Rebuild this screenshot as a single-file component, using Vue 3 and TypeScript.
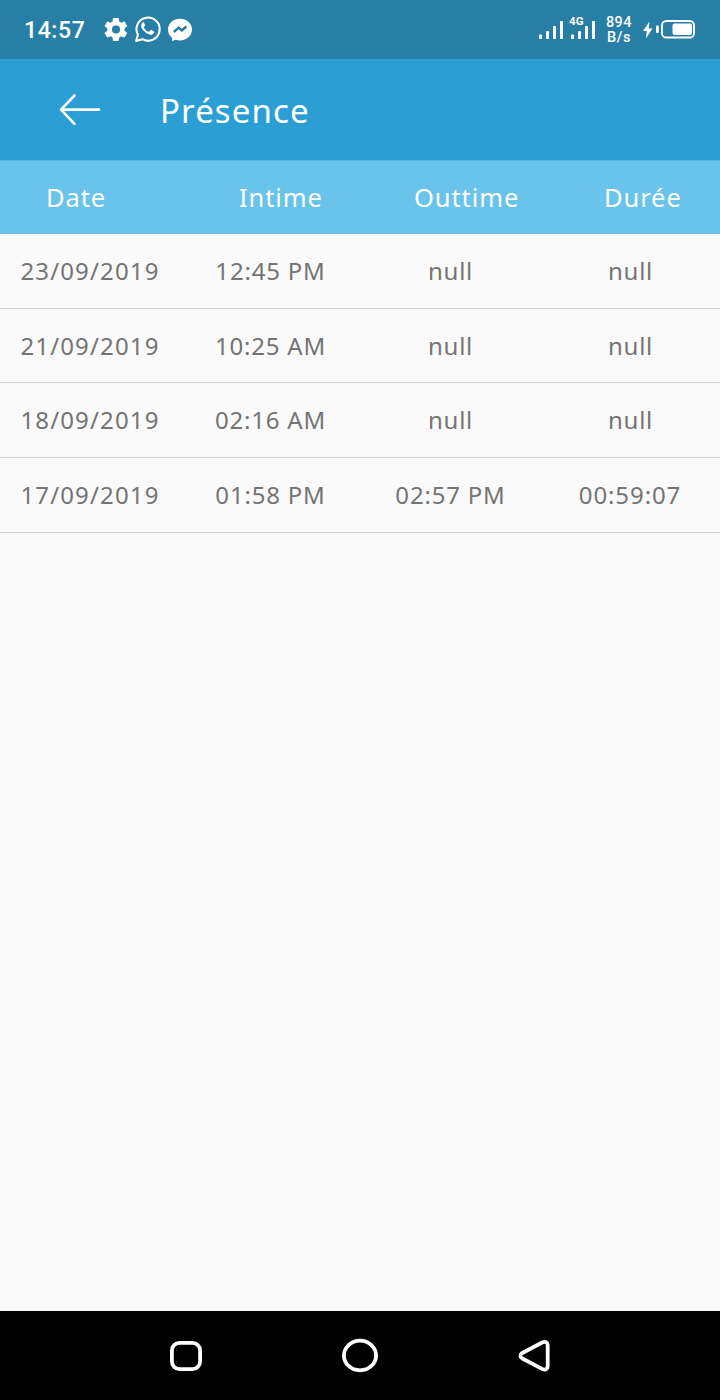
<script setup lang="ts">
interface Entry {
  date: string
  intime: string
  outtime: string | null
  duration: string | null
}

const entries: Entry[] = [
  { date: '23/09/2019', intime: '12:45 PM', outtime: null, duration: null },
  { date: '21/09/2019', intime: '10:25 AM', outtime: null, duration: null },
  { date: '18/09/2019', intime: '02:16 AM', outtime: null, duration: null },
  { date: '17/09/2019', intime: '01:58 PM', outtime: '02:57 PM', duration: '00:59:07' },
]
</script>

<template>
  <div class="screen">
    <div class="status">
      <span class="clock">14:57</span>
      <svg class="apps" width="90" height="30" viewBox="104 15 90 30">
        <g transform="translate(102.2 15.7) scale(1.15)">
          <path fill="#fff" d="M19.4 13c0-.3.1-.6.1-1s0-.7-.1-1l2.1-1.6c.2-.2.2-.4.1-.6l-2-3.5c-.1-.2-.4-.3-.6-.2l-2.5 1c-.5-.4-1.1-.7-1.7-1l-.4-2.6c0-.3-.2-.5-.5-.5h-4c-.2 0-.4.2-.5.5L9 5.1c-.6.2-1.1.6-1.7 1l-2.5-1c-.2-.1-.5 0-.6.2l-2 3.5c-.1.2-.1.5.1.6L4.5 11c0 .3-.1.7-.1 1s0 .7.1 1l-2.2 1.6c-.2.2-.2.4-.1.6l2 3.5c.1.2.4.3.6.2l2.5-1c.5.4 1.1.7 1.7 1l.4 2.6c0 .3.2.5.5.5h4c.2 0 .5-.2.5-.5l.4-2.6c.6-.2 1.2-.6 1.7-1l2.5 1c.2.1.5 0 .6-.2l2-3.5c.1-.2.1-.5-.1-.6zM12 15.5a3.5 3.5 0 1 1 0-7 3.500 3.500 0 0 1 0 7z" />
        </g>
        <path d="M136.200 41l1.700-6.300a11.600 11.600 0 1 1 4.400 4.500z" fill="none" stroke="#fff" stroke-width="2.100" stroke-linejoin="round" />
        <path fill="#fff" d="M144 22.700c-.5-.6-1.100-.5-1.600 0-3.300 3.200.8 7.900 3.300 9.800 2.800 2.200 6.200 3.500 8.300.5.500-1 .3-1.400-.4-1.800l-2.200-1.100c-.5-.2-.8-.1-1.100.3l-1 1.200c-.3.300-.6.300-1 .1-2-.9-3.300-2.100-4.400-4-.2-.4-.1-.6.2-.9l.9-1.200c.2-.4.1-.6 0-.9z" />
        <path fill="#fff" d="M180 18.700c-6.800 0-12 4.700-12 10.800 0 3.400 1.500 6.300 4 8.200v3.300l3.700-1.300c1.300.5 2.800.7 4.300.7 6.700 0 12-4.800 12-10.900s-5.300-10.800-12-10.800z" />
        <path fill="none" stroke="#287fa6" stroke-width="2.400" stroke-linejoin="round" d="M173.800 32l4.900-4.400 3.100 2.900 4.600-4" />
      </svg>
      <div class="spacer"></div>
      <svg class="signal" width="58" height="28" viewBox="538 14 58 28">
        <g fill="#fff">
          <rect x="539" y="34.500" width="3" height="4.500" rx=".7" />
          <rect x="546" y="31" width="3" height="8" rx=".7" />
          <rect x="553" y="26" width="3" height="13" rx=".7" />
          <rect x="560" y="21" width="3" height="18" rx=".7" />
          <rect x="571" y="34.500" width="3" height="4.500" rx=".7" />
          <rect x="578" y="31" width="3" height="8" rx=".7" />
          <rect x="585" y="26" width="3" height="13" rx=".7" />
          <rect x="592" y="21" width="3" height="18" rx=".7" />
          <text x="569" y="25" font-family="Roboto, sans-serif" font-size="11.500" font-weight="700" textLength="14.500">4G</text>
        </g>
      </svg>
      <div class="rate"><span>894</span><span>B/s</span></div>
      <svg class="battery" width="54" height="24" viewBox="642 18 54 24">
        <path fill="#fff" d="M649.500 21.500l-6.500 9.500h3.800l-.9 7.500 6.600-10h-3.900z" />
        <rect x="656" y="25.500" width="2.800" height="7.500" rx="1" fill="#fff" />
        <rect x="662" y="21" width="32" height="16.500" rx="4.300" fill="none" stroke="#fff" stroke-width="1.900" />
        <rect x="672.500" y="23.500" width="19.500" height="11.500" rx="2" fill="#fff" />
      </svg>
    </div>

    <header class="bar">
      <svg class="back" width="44" height="36" viewBox="58 92 44 36">
        <path d="M74.500 95.500L61 109.600l13.500 14.200M61.500 109.600H99" fill="none" stroke="#fff" stroke-width="2.600" stroke-linecap="round" stroke-linejoin="round" />
      </svg>
      <h1 class="title">Présence</h1>
    </header>

    <div class="head">
      <span>Date</span>
      <span>Intime</span>
      <span>Outtime</span>
      <span>Durée</span>
    </div>

    <main class="list">
      <div v-for="e in entries" :key="e.date" class="row">
        <span class="date">{{ e.date }}</span>
        <span class="time">{{ e.intime }}</span>
        <span :class="e.outtime ? 'time' : 'none'">{{ e.outtime ?? 'null' }}</span>
        <span :class="e.duration ? 'duration' : 'none'">{{ e.duration ?? 'null' }}</span>
      </div>
    </main>

    <nav class="nav">
      <svg width="720" height="89" viewBox="0 1311 720 89" fill="none" stroke="#fff" stroke-width="3.800">
        <rect x="171.900" y="1342.900" width="28.200" height="26.200" rx="7.500" />
        <ellipse cx="360" cy="1355.500" rx="16.100" ry="14.800" />
        <path stroke-linejoin="round" d="M521.900 1353.200L542.600 1342.300c2.400-1.200 5.100 0 5.100 2.600v21.600c0 2.600-2.700 3.800-5.100 2.600L521.900 1358.200c-1.900-1.100-1.900-3.900 0-5z" />
      </svg>
    </nav>
  </div>
</template>

<style>
body {
  margin: 0;
  background: #fafafa;
}
</style>

<style scoped>
.screen {
  width: 720px;
  height: 1400px;
  display: flex;
  flex-direction: column;
  overflow: hidden;
  background: #fafafa;
  font-family: "Noto Sans", "Open Sans", sans-serif;
}
.status {
  box-sizing: border-box;
  flex: none;
  height: 59px;
  padding: 0 24px;
  display: flex;
  align-items: center;
  background: #287fa6;
  color: #fff;
  font-family: Roboto, sans-serif;
}
.clock {
  width: 80px;
  margin-top: 2px;
  font-size: 23px;
  font-weight: 500;
  letter-spacing: 0.6px;
  line-height: 30px;
}
.spacer {
  flex: 1;
}
.signal {
  margin: -3px 1px 0 0;
}
.rate {
  width: 28px;
  margin: 1px 9px 0 8px;
  display: flex;
  flex-direction: column;
  align-items: center;
  font-size: 14.5px;
  font-weight: 500;
  line-height: 15.5px;
  letter-spacing: 0.5px;
}
.bar {
  flex: none;
  height: 101px;
  display: flex;
  align-items: center;
  background: #2b9fd3;
  color: #fff;
}
.back {
  margin-left: 58px;
}
.title {
  margin: 2px 0 0 58px;
  font-size: 33px;
  font-weight: 400;
  line-height: 44px;
  letter-spacing: 1.1px;
}
.head {
  box-sizing: border-box;
  flex: none;
  height: 74px;
  border-top: 1px solid #5bb7e2;
  padding: 0 0 2px 46px;
  display: grid;
  grid-template-columns: 193px 175px 190px 1fr;
  align-items: center;
  background: #69c3eb;
  color: #fff;
  font-size: 25.5px;
  line-height: 36px;
  letter-spacing: 0.9px;
}
.list {
  flex: 1;
}
.row {
  box-sizing: border-box;
  height: 74.65px;
  padding-top: 0.6px;
  border-bottom: 1px solid #d2d4d3;
  display: grid;
  grid-template-columns: repeat(4, 180px);
  align-items: center;
  text-align: center;
  color: #747474;
  font-size: 24px;
  line-height: 34px;
}
.date {
  letter-spacing: 1.15px;
}
.time {
  padding-left: 1px;
  letter-spacing: 0.8px;
}
.duration {
  letter-spacing: 0.9px;
}
.none {
  padding-left: 1px;
  letter-spacing: 0.7px;
}
.nav {
  flex: none;
  height: 89px;
  background: #000;
}
.nav svg {
  display: block;
}
</style>
